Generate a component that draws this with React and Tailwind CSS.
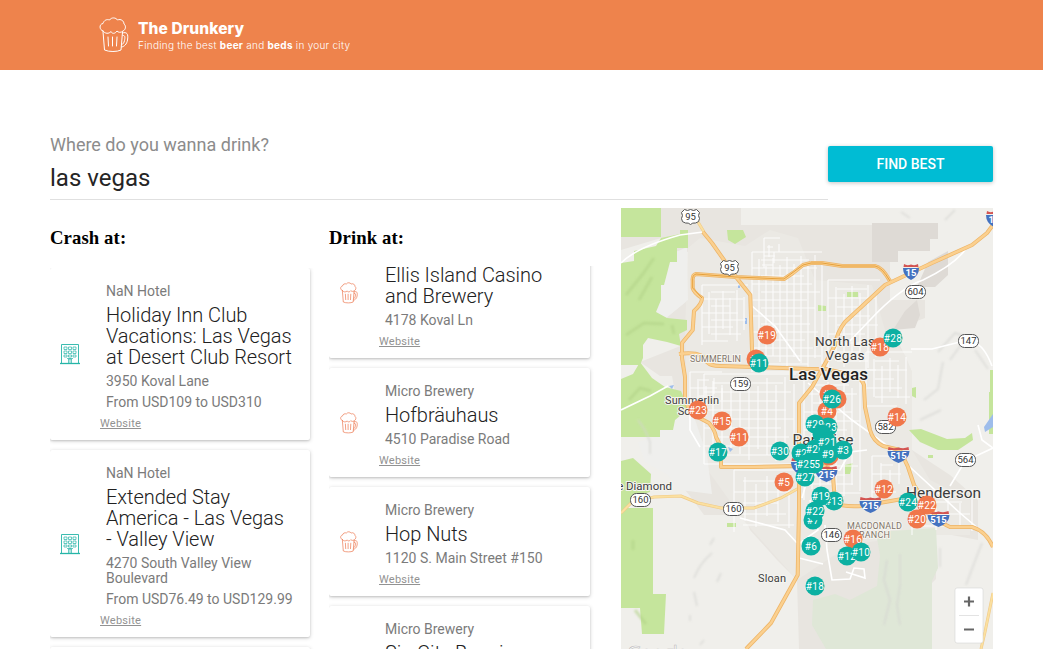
import React from "react";

const hotels = [
  {
    kind: "NaN Hotel",
    name: "Holiday Inn Club Vacations: Las Vegas at Desert Club Resort",
    address: "3950 Koval Lane",
    price: "From USD109 to USD310",
  },
  {
    kind: "NaN Hotel",
    name: "Extended Stay America - Las Vegas - Valley View",
    address: "4270 South Valley View Boulevard",
    price: "From USD76.49 to USD129.99",
  },
  { kind: "", name: "", address: "", price: "" },
];

const bars = [
  { kind: "", name: "Ellis Island Casino and Brewery", address: "4178 Koval Ln" },
  { kind: "Micro Brewery", name: "Hofbräuhaus", address: "4510 Paradise Road" },
  { kind: "Micro Brewery", name: "Hop Nuts", address: "1120 S. Main Street #150" },
  { kind: "Micro Brewery", name: "Sin City Brewing", address: "" },
];

function BeerIcon({ className }) {
  return (
    <svg className={className} viewBox="0 0 30 36" fill="none" stroke="currentColor" strokeLinecap="round" strokeLinejoin="round">
      <path d="M4 14C0 13 0 7 4 6.500C5 3 8 2 10.500 3C12.500 0 17 .5 18.500 3C22 1.500 25 4 25 7C27.500 9 26.500 13 24 14C22 16 19 15.500 18 14C16 17 13 17 12 14.500C10 17 6 17 4 14Z" />
      <path d="M4 14.500L5.500 33C10 35 18 35 22 33L23.500 15M23.500 16C28 14.500 29.500 17 28.500 23C28 27 25 30 22.500 30M24 18.500C26.500 18 26 21 25.500 23.500C25 26 24 27 23 27.500M9 20L9.500 29M13.500 20V29M18 20L17.500 29" />
    </svg>
  );
}

function HotelIcon({ className }) {
  return (
    <svg className={className} viewBox="0 0 20 22" fill="none" stroke="currentColor" strokeWidth="1">
      <path d="M1.500 20V1.500H18.500V20" strokeWidth=".9" />
      <path d="M0 20.500H20" strokeWidth="1.300" />
      <path d="M8.500 20V16H11.500V20M7 15.500H13M10 15.500V20" strokeWidth=".7" />
      <path d="M4 4H7V6.500H4ZM8.500 4H11.500V6.500H8.500ZM13 4H16V6.500H13ZM4 8H7V10.500H4ZM8.500 8H11.500V10.500H8.500ZM13 8H16V10.500H13ZM4 12H7V14H4ZM8.500 12H11.500V14H8.500ZM13 12H16V14H13Z" strokeWidth=".7" />
    </svg>
  );
}

function Card({ item, icon }) {
  return (
    <article className="flex shrink-0 items-center rounded-[2px] bg-white shadow-[0_1px_4px_rgba(0,0,0,0.18),0_1px_2px_rgba(0,0,0,0.12)]">
      <div className="flex w-[50px] shrink-0 pl-[10px]">{icon}</div>
      <div className="min-w-0 flex-1 pt-4 pb-[10px]">
        <div className="flex flex-col gap-1.5 pr-4 pl-1.5 text-[14px] leading-[15px] text-[#7b7b7b]">
          <p className="min-h-[15px]">{item.kind}</p>
          <h3 className="text-[20px] leading-[21px] font-light tracking-[-0.05px] text-[#212121]">{item.name}</h3>
          <p className="min-h-[15px]">{item.address}</p>
          {item.price && <p className="whitespace-nowrap">{item.price}</p>}
        </div>
        <a className="mt-[7px] block text-[11px] leading-[13px] tracking-[0.25px] text-[#929292] underline">{item.name && "Website"}</a>
      </div>
    </article>
  );
}

const O = "#f0764a";
const T = "#0cb0a2";
const markers = [
  [767, 335, "19", O], [756, 359, "8", O], [759, 363, "11", T], [880, 347, "18", O], [893, 338, "28", T],
  [698, 410, "23", O], [722, 421, "15", O], [739, 437, "11", O], [718, 452, "17", T], [897, 417, "14", O],
  [829, 394, "2", O], [837, 399, "1", O], [827, 411, "4", O], [832, 399, "26", T], [828, 427, "23", T],
  [815, 424, "29", T], [822, 434, "", T], [780, 451, "30", T], [801, 453, "2", T], [815, 449, "20", T], [827, 442, "21", T],
  [829, 456, "", O], [843, 450, "3", T], [828, 454, "9", T], [814, 464, "5", T], [806, 464, "25", T], [805, 477, "27", T],
  [784, 482, "5", O], [884, 489, "12", O], [834, 501, "13", T], [821, 496, "19", T], [927, 505, "22", O],
  [908, 502, "24", T], [917, 519, "20", O], [813, 520, "7", T], [815, 511, "22", T], [811, 546, "6", T],
  [853, 539, "16", O], [847, 556, "12", T], [861, 552, "10", T], [815, 586, "18", T],
];

const freeways = [
  "M811 263L803 265L793 273L784 279L736 277L696 274Q692 275 692.700 281V288Q694 293 702 298Q702 304 694 311L692.700 330L682 343V358L685 377V397Q687 409 694 415L709 423Q715 430 716 437L721 447V467L754 467L799 466L824 466Q833 469 833 476L835 503Q842 507 862 506L908 498",
  "M811 263H822L842 266H875Q882 267 890 281",
  "M993 225L987 233L972 245L932 263L885 285L845 322Q837 332 835 345L826 362L812 387L799 403V508L797.700 575L771 623L746 649",
  "M703 232L712 243L736 277L750.300 295L752 350V367",
  "M679 354Q703 351 707 362Q711 366 720 366L754 367L811 369H826L843 373Q861 375 864 385L865 407L870 430Q873 441 883 446L900 450L908 467L914 485L925 502L940 522L950 527H972Q986 531 993 547",
];

function gridPath(x0, x1, y0, y1, dx, dy) {
  let d = "";
  for (let x = x0, i = 0; x <= x1; x += dx, i++) d += `M${x} ${y0 + ((i * 7) % 15)}V${y1 - ((i * 11) % 17)}`;
  for (let y = y0, i = 0; y <= y1; y += dy, i++) d += `M${x0 + ((i * 9) % 18)} ${y}H${x1 - ((i * 13) % 21)}`;
  return d;
}

const streets = [
  gridPath(702, 748, 285, 345, 7, 7),
  gridPath(752, 822, 252, 372, 7, 8),
  gridPath(764, 780, 238, 268, 5, 9),
  gridPath(828, 880, 280, 372, 8, 9),
  gridPath(704, 796, 374, 464, 9, 9),
  gridPath(734, 796, 470, 532, 11, 11),
  gridPath(804, 862, 376, 500, 8, 9),
  gridPath(866, 912, 352, 408, 8, 9),
  gridPath(872, 906, 456, 500, 9, 9),
  gridPath(912, 975, 490, 535, 12, 12),
  gridPath(690, 722, 372, 410, 8, 8),
];

function Oval({ x, y, n }) {
  return (
    <g>
      <rect x={x - 10} y={y - 6.5} width="20" height="13" rx="6" fill="#fff" stroke="#555" />
      <text x={x} y={y + 3.3} textAnchor="middle" fontSize="9.500" fill="#333">{n}</text>
    </g>
  );
}

function UsShield({ x, y }) {
  return (
    <g>
      <path transform={`translate(${x} ${y})`} d="M-6-7Q-3-5 0-7Q3-5 6-7L9-4Q7-1 9 2Q9 6 5 6.500Q2 6 0 8Q-2 6-5 6.500Q-9 6-9 2Q-7-1-9-4Z" fill="#fff" stroke="#555" />
      <text x={x} y={y + 3.5} textAnchor="middle" fontSize="9.500" fill="#333">95</text>
    </g>
  );
}

function Interstate({ x, y, n, w = 11 }) {
  return (
    <g>
      <path transform={`translate(${x} ${y})`} d={`M${-w} -4H${w}Q${w} 4 0 8Q${-w} 4 ${-w} -4Z`} fill="#4472c0" />
      <path transform={`translate(${x} ${y})`} d={`M${1 - w} -8Q${-w / 2} -6 0 -7.500Q${w / 2} -6 ${w - 1} -8L${w - 0.5} -5H${0.5 - w}Z`} fill="#d35552" />
      <text x={x} y={y + 4} textAnchor="middle" fontSize="9.500" fontWeight="700" fill="#fff">{n}</text>
    </g>
  );
}

function CityMap() {
  return (
    <svg className="block h-[441px] w-[372px]" viewBox="621 208 372 441" fontFamily="Roboto, sans-serif">
      <defs>
        <filter id="relief" x="-10%" y="-10%" width="120%" height="120%"><feGaussianBlur stdDeviation="1.200" /></filter>
      </defs>
      <rect x="621" y="208" width="372" height="441" fill="#f0efeb" />
      <path d="M661 208H741V225H872V262H890V300H925V318L893 330L912 372H912V450L950 475L978 500V540L936 532V579L925 590V649H799L797 580L777 560L750 530L745 515H704L690 496L660 460L680 420L672 376H660L640 362L683 345L661 322L688 300V252L661 250V238L621 250V237H661Z" fill="#e8e5e0" />
      <path d="M688 248L700 238L745 246L770 230L798 238L815 280L872 285L885 330L905 355L912 372V450L930 480L970 500V535H915L850 545L797 580L745 522L704 465L688 430L685 330Z" fill="#ebe9e4" />
      <path d="M872 223H938V239H930V251H898V262H872ZM928 262L948 251V275L935 287H917ZM905 311L917 300L920 315L915 328L893 330Z" fill="#dedad5" />
      <path d="M660 395L690 405L707 455L712 494L680 490L668 475L645 462L638 442L652 438ZM650 264L687 247L688 300L660 323L655 300Z" fill="#efefed" />
      <path d="M621 208H661V237H621ZM621 263L634 261V251L656 246L661 238L680 234V230H688V248H677V262H670L664 285H661V300L656 312L667 318L687 320V330L679 334L681 346L667 342L648 338L643 345V358L640 365H621Z" fill="#c5e59c" />
      <path d="M621 379L633 374L640 362L652 378L665 387L681 391L688 408L681 415L675 420L673 430H660V437H621ZM621 461L633 458L651 474L650 492L636 496L621 515ZM621 508H653V594H666L664 634H642L640 608H621ZM727 230H743L746 237L735 244L728 240ZM727 523H736V527H727Z" fill="#c5e59c" />
      <path d="M909 430L921 429L947 439L965 438L972 433L973 440L958 450H938L920 442ZM912 388L916 387V398L912 396ZM990 370H993V434H989V392H990ZM847 292H858V297H847ZM818 305L826 306V311H818ZM845 465L853 463L850 474H845ZM928 455H933V458H928Z" fill="#c5e59c" />
      <path d="M876 532L936 528L938 568L932 581V649H826L812 625L813 600L835 594L850 600L877 586L880 556Z" fill="#dfe7d7" />
      <g filter="url(#relief)" fill="none" stroke="#b2d388" strokeWidth="3" opacity=".6">
        <path d="M626 295L642 275L654 258M639 300L652 277M626 335L644 323L664 324M629 400L640 388L651 391M633 540V550M635 610L646 624M672 325L674 334" />
      </g>
      <g filter="url(#relief)" fill="none" stroke="#d4d4d0" strokeWidth="2" opacity=".6">
        <path d="M714 538L710 545M712 553Q700 563 694 578M694 592L697 606M690 615V621M721 573L717 582M638 420Q646 430 650 442V454M943 362L938 389L924 400M938 352L955 333L970 338M950 360L963 342M966 585L975 561L982 543M940 548V567M900 554V585L897 605L900 625M887 560L884 580L890 600L884 625M700 645L704 640M941 410L920 420M975 350L988 369M945 220L955 210M901 212L910 218" />
      </g>
      <path d="M669 386L674 385L672 389ZM728 447L733 449L730 452ZM984 427L993 414V427L985 432ZM738 285H740V288H738ZM745 318H747V324H745Z" fill="#9ebdeb" />
      <g fill="none" stroke="#fff" strokeWidth="1.100" opacity=".85">
        {streets.map((d, i) => <path key={i} d={d} />)}
      </g>
      <g fill="none" stroke="#fff" strokeWidth="1.600">
        <path d="M621 263Q637 247 680 235L703 232M621 410L650 396L668 386M752 306L775 326L800 361M965 250Q954 265 923 280Q900 288 870 320L846 345M808 383L852 420L884 443L911 468L960 513L980 530M911 349H932L960 342M974 343Q984 345 992 366M978 425L982 440L993 448L965 461L950 486M799 477L811 485M825 525L827 550L832 580L850 579L854 568L864 569L865 578L846 572M799 558L823 564" />
        <path d="M690 405V430L700 447M810 470H840L850 452L867 450M740 518L785 530L797 543M802 498L810 470L824 450M810 500L818 530L797 545" />
      </g>
      <path d="M621 513L632 502L654 497L681 496L698 503L721 508H754L781 498L799 488M698 222L704 232M993 593L985 632L981 649" fill="none" stroke="#f0ca88" strokeWidth="3" />
      <path d="M621 513L632 502L654 497L681 496L698 503L721 508H754L781 498L799 488M698 222L704 232M993 593L985 632L981 649" fill="none" stroke="#fbe0a0" strokeWidth="1.800" />
      <g fill="none" stroke="#edb568" strokeWidth="4" strokeLinejoin="round">
        {freeways.map((d, i) => <path key={i} d={d} />)}
      </g>
      <g fill="none" stroke="#fbd08f" strokeWidth="2.500" strokeLinejoin="round">
        {freeways.map((d, i) => <path key={i} d={d} />)}
      </g>
      <path d="M811 263L803 265L784 279L736 277L696 274Q692 275 692.700 281V288L702 298M811 263H822L842 266H875Q882 267 890 281" fill="none" stroke="#e5a03c" strokeWidth="1" />
      <UsShield x={690.5} y={216.5} />
      <UsShield x={729.5} y={267.5} />
      <Interstate x={911} y={272} n="15" w={8} />
      <Interstate x={994} y={219} n="15" w={8} />
      <Interstate x={799} y={466} n="15" w={8} />
      <Interstate x={898.5} y={455} n="515" />
      <Interstate x={938.5} y={519} n="515" />
      <Interstate x={826.5} y={474} n="215" />
      <Interstate x={870.5} y={505} n="215" />
      <Oval x={915.5} y={292} n="604" /><Oval x={968.5} y={341} n="147" /><Oval x={740.5} y={384} n="159" />
      <Oval x={885.5} y={427} n="582" /><Oval x={965.5} y={460} n="564" /><Oval x={640.5} y={500} n="160" />
      <Oval x={733.5} y={509} n="160" /><Oval x={831.5} y={535} n="146" />
      <g stroke="#f5f4f0" strokeWidth="2" paintOrder="stroke" fill="#3c3c3c" textAnchor="middle" fontSize="12">
        <text x="845" y="346" fontSize="13.500" textLength="60">North Las</text>
        <text x="845" y="360" fontSize="13.500" textLength="39">Vegas</text>
        <text x="828.500" y="380" fontSize="17" fontWeight="500" fill="#222" textLength="79">Las Vegas</text>
        <text x="823" y="445" fontSize="15.500" textLength="61">Paradise</text>
        <text x="943.500" y="498" fontSize="15.500" textLength="75">Henderson</text>
        <text x="692" y="404" fontSize="11" textLength="54">Summerlin</text>
        <text x="692" y="415" fontSize="11">South</text>
        <text x="672" y="490" fontSize="11.500" textAnchor="end" textLength="71">Blue Diamond</text>
        <text x="772" y="582" fontSize="11" textLength="28">Sloan</text>
        <g fill="#82766a" fontSize="9">
          <text x="715.500" y="362" textLength="51">SUMMERLIN</text>
          <text x="874.500" y="529" textLength="55">MACDONALD</text>
          <text x="874.500" y="538" textLength="31">RANCH</text>
        </g>
      </g>
      {markers.map(([x, y, n, c], i) => (
        <g key={i}>
          <circle cx={x} cy={y} r="9.500" fill={c} />
          {n && <text x={x} y={y + 3.5} textAnchor="middle" fontSize="10" letterSpacing=".3" fill="#fff">#{n}</text>}
        </g>
      ))}
      <text x="627" y="660" fontFamily="Open Sans, sans-serif" fontSize="20" fill="#fff" stroke="#bbb" strokeWidth=".6" textLength="61">Google</text>
      <rect x="955" y="588" width="28" height="55" rx="2" fill="#fff" stroke="#ccc" strokeWidth=".5" />
      <path d="M959 615.500H979" stroke="#e3e3e3" />
      <path d="M964 601.500H974M969 596.500V606.500M964 629.500H974" stroke="#666" strokeWidth="2.200" />
    </svg>
  );
}

export default function App() {
  return (
    <div className="flex h-[649px] w-[1043px] flex-col overflow-hidden bg-white font-[Roboto,sans-serif]">
      <header className="flex h-[70px] shrink-0 items-center bg-[#ee834c] pl-[99px] text-white">
        <BeerIcon className="h-9 w-[30px]" />
        <div className="ml-[9px] pt-[3px] font-[Inter,sans-serif] whitespace-nowrap">
          <h1 className="text-[15.500px] leading-[18px] font-extrabold tracking-[0.1px]">The Drunkery</h1>
          <p className="text-[10px] leading-[15px] font-light tracking-[0.26px]">Finding the best <b className="font-bold">beer</b> and <b className="font-bold">beds</b> in your city</p>
        </div>
      </header>
      <main className="flex min-h-0 flex-1 flex-col px-[50px] pt-[62px]">
        <form className="flex h-[76px] shrink-0 items-start">
          <label className="flex h-[68px] flex-1 flex-col border-b border-[#e0e0e0]">
            <span className="text-[18px] leading-[26px] text-[#8c8c8c]">Where do you wanna drink?</span>
            <span className="mt-1 text-[24px] leading-8 text-[#252525]">las vegas</span>
          </label>
          <button type="button" className="mt-[14px] h-9 w-[165px] rounded-[2px] bg-[#00bcd4] text-[14px] font-medium text-white shadow-[0_1px_4px_rgba(0,0,0,0.24)]">FIND BEST</button>
        </form>
        <div className="flex min-h-0 flex-1">
          <section className="flex w-[279px] flex-col">
            <h2 className="h-[60px] shrink-0 pt-[19px] font-[Liberation_Serif,serif] text-[18.720px] leading-[21px] font-bold tracking-[0.1px] text-black">Crash at:</h2>
            <div className="flex min-h-0 w-[264px] flex-1 flex-col gap-[10px] overflow-hidden pr-1">
              {hotels.map((h, i) => <Card key={i} item={h} icon={<HotelIcon className="h-[22px] w-5 text-[#26b5a8]" />} />)}
            </div>
          </section>
          <section className="flex w-[292px] flex-col">
            <h2 className="h-[58px] shrink-0 pt-[19px] font-[Liberation_Serif,serif] text-[18.720px] leading-[21px] font-bold tracking-[0.1px] text-black">Drink at:</h2>
            <div className="flex min-h-0 w-[265px] flex-1 flex-col overflow-hidden pr-1">
              <div className="-mt-[38px] flex flex-col gap-[10px]">
                {bars.map((b, i) => <Card key={i} item={b} icon={<BeerIcon className="ml-px h-[22px] w-[18px] text-[#ee8560] [stroke-width:1.300px]" />} />)}
              </div>
            </div>
          </section>
          <CityMap />
        </div>
      </main>
    </div>
  );
}
